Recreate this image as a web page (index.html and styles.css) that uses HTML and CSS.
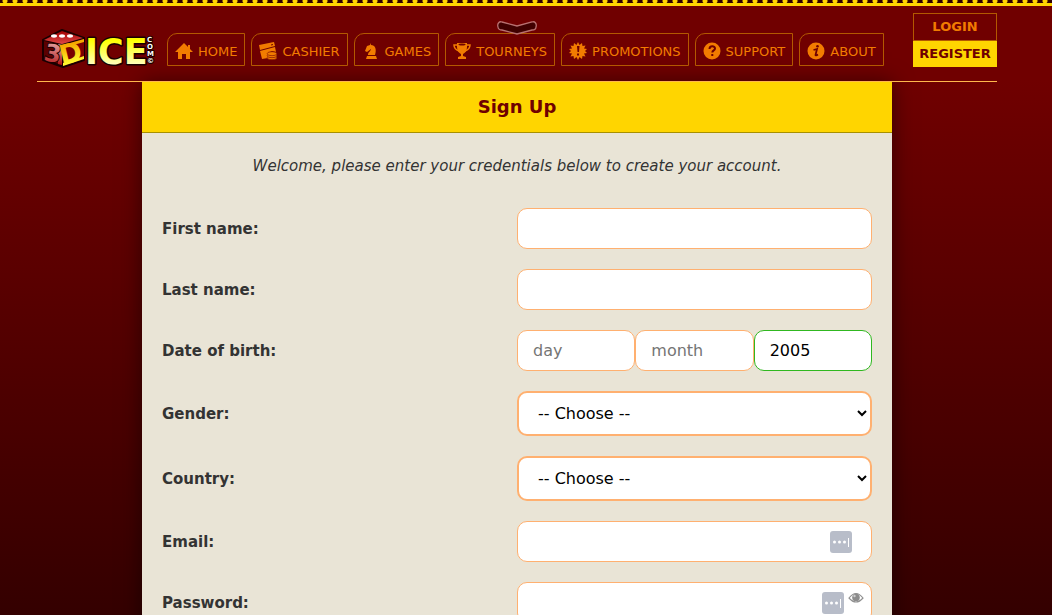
FILE: index.html
```html
<!DOCTYPE html>
<html lang="en">
<head>
    <meta charset="UTF-8">
    <meta name="viewport" content="width=device-width, initial-scale=1.0">
    <title>3Dice - Sign Up</title>
    <link rel="stylesheet" href="styles.css">
</head>
<body>
    <div class="top-strip"></div>

    <div class="page">
        <header class="header">
            <a href="#" class="logo" aria-label="3Dice.com">
                <svg width="118" height="44" viewBox="0 0 118 44">
                    <defs>
                        <linearGradient id="die-top" x1="0" y1="0" x2="0" y2="1">
                            <stop offset="0" stop-color="#a00000"/>
                            <stop offset="1" stop-color="#e04848"/>
                        </linearGradient>
                        <linearGradient id="die-left" x1="0" y1="0" x2="0" y2="1">
                            <stop offset="0" stop-color="#e8b0b0"/>
                            <stop offset="1" stop-color="#b01010"/>
                        </linearGradient>
                        <linearGradient id="d-letter" x1="0" y1="0" x2="0" y2="1">
                            <stop offset="0.2" stop-color="#f5a800"/>
                            <stop offset="0.85" stop-color="#ffff30"/>
                        </linearGradient>
                        <linearGradient id="letters" x1="0" y1="0" x2="0" y2="1">
                            <stop offset="0.2" stop-color="#ffff00"/>
                            <stop offset="0.85" stop-color="#ffffc8"/>
                        </linearGradient>
                    </defs>
                    <path d="M1 11 20 1 42 9V31L21 38 1 31Z" fill="#1a0000" stroke="#1a0000" stroke-width="2" stroke-linejoin="round"/>
                    <path d="M2 11 20 2 41 9 20 15Z" fill="url(#die-top)"/>
                    <path d="M2 12 20 16V36L2 30Z" fill="#5c0000"/>
                    <path d="M16 15 20 16V36L16 35Z" fill="url(#die-left)"/>
                    <path d="M21 16 42 10V30L21 37Z" fill="#7a0000"/>
                    <path d="M21 16 42 10V13L21 19ZM21 34 42 27V30L21 37Z" fill="url(#d-letter)"/>
                    <g fill="#fff">
                        <ellipse cx="12" cy="7" rx="3" ry="1.700"/>
                        <ellipse cx="20" cy="7" rx="3" ry="1.700"/>
                        <ellipse cx="28" cy="7" rx="3" ry="1.700"/>
                    </g>
                    <text x="1" y="31" class="logo-three" transform="rotate(11 1 31)">3</text>
                    <text x="20" y="36" class="logo-d" transform="rotate(-14 20 36)">D</text>
                    <text x="43" y="35" class="logo-name">ICE</text>
                    <g class="logo-side">
                        <text x="105" y="13">C</text>
                        <text x="105" y="20">O</text>
                        <text x="105" y="27">M</text>
                        <text x="105" y="34">©</text>
                    </g>
                </svg>
            </a>

            <nav class="nav">
                <a href="#" class="nav-item">
                    <svg class="icon" viewBox="0 0 18 18"><path d="M9 1 0 10h3v7h4v-5h4v5h4v-7h3l-3-3V3h-2v2z"/></svg>
                    HOME
                </a>
                <a href="#" class="nav-item">
                    <svg class="icon" viewBox="0 0 18 18">
                        <path d="M0 3 15 0l1 4L1 8zM1 9l15-4 1 5-4-1-4 2v5l-6 1z"/>
                        <g fill="#f27c00" stroke="#700000" stroke-width=".6"><ellipse cx="13" cy="15.700" rx="4.800" ry="2"/><ellipse cx="13" cy="13.700" rx="4.800" ry="2"/><ellipse cx="13" cy="11.700" rx="4.800" ry="2"/></g>
                        <path d="M12 3l2-.5" stroke="#700000"/>
                    </svg>
                    CASHIER
                </a>
                <a href="#" class="nav-item">
                    <svg class="icon" viewBox="0 0 18 18"><path d="M8 1 9 3c4 0 6 4 4 10H6c0-3 3-4 3-6L5 10 3 9l2-5 3-1zM5 14h9l1 3H4z"/></svg>
                    GAMES
                </a>
                <a href="#" class="nav-item">
                    <svg class="icon" viewBox="0 0 18 18">
                        <path d="M4 1h10v4c0 4-2 6-4 7v2l3 1v2H5v-2l3-1v-2C6 11 4 9 4 5z"/>
                        <path d="M4 3H1c0 4 2 5 5 6M14 3h3c0 4-2 5-5 6" fill="none" stroke="#f27c00" stroke-width="1.500"/>
                        <ellipse cx="9" cy="2.500" rx="3.500" ry="1" fill="#700000"/>
                    </svg>
                    TOURNEYS
                </a>
                <a href="#" class="nav-item">
                    <svg class="icon" viewBox="0 0 18 18">
                        <path d="m9 0 1.500 3L13 1l.5 3 3-.5L15 6.500 18 7l-2 2 2 2-3 .5 1.500 3-3-.5-.5 3-2.500-2L9 18l-1.500-3L5 17l-.5-3-3 .5 1.500-3L0 11l2-2-2-2 3-.5-1.500-3 3 .5L5 1l2.500 2z"/>
                        <path d="M8 4h2.500L10 10H8.500zM8 11.500h2v2H8z" fill="#700000"/>
                    </svg>
                    PROMOTIONS
                </a>
                <a href="#" class="nav-item">
                    <svg class="icon" viewBox="0 0 18 18"><circle cx="9" cy="9" r="8.500"/><path d="M6.500 7c0-3.500 5.500-3.500 5.500-.5 0 2-2.700 1.800-2.700 4M9.300 12v2" fill="none" stroke="#700000" stroke-width="2"/></svg>
                    SUPPORT
                </a>
                <a href="#" class="nav-item">
                    <svg class="icon" viewBox="0 0 18 18"><circle cx="9" cy="9" r="8.500"/><path d="M6.500 8 10 7 8.500 13q0 1 2.500-.5" fill="none" stroke="#700000" stroke-width="1.800"/><circle cx="10.500" cy="4.300" r="1.300" fill="#700000"/></svg>
                    ABOUT
                </a>
            </nav>

            <div class="account">
                <a href="#" class="login">LOGIN</a>
                <a href="#" class="register">REGISTER</a>
            </div>

            <button class="pull-down" aria-label="Show menu">
                <svg width="40" height="14" viewBox="0 0 40 14"><path d="M5 1 20 5 35 1C38 0 40 3 39 6 39 8 37 9 35 9L20 13 5 9C3 9 1 8 1 6 0 3 2 0 5 1Z" fill="#400000" stroke="#b87070" stroke-width="1.300"/></svg>
            </button>
        </header>

        <main class="panel">
            <h1 class="title">Sign Up</h1>
            <form class="form">
                <p class="intro">Welcome, please enter your credentials below to create your account.</p>

                <div class="row">
                    <label for="first-name">First name:</label>
                    <div class="field"><input type="text" id="first-name"></div>
                </div>
                <div class="row">
                    <label for="last-name">Last name:</label>
                    <div class="field"><input type="text" id="last-name"></div>
                </div>
                <div class="row">
                    <label for="day">Date of birth:</label>
                    <div class="field">
                        <input type="text" id="day" placeholder="day">
                        <input type="text" placeholder="month" aria-label="Month of birth">
                        <input type="text" class="valid" value="2005" aria-label="Year of birth">
                    </div>
                </div>
                <div class="row">
                    <label for="gender">Gender:</label>
                    <div class="field">
                        <select id="gender">
                            <option>-- Choose --</option>
                            <option>Female</option>
                            <option>Male</option>
                        </select>
                    </div>
                </div>
                <div class="row">
                    <label for="country">Country:</label>
                    <div class="field">
                        <select id="country">
                            <option>-- Choose --</option>
                        </select>
                    </div>
                </div>
                <div class="row">
                    <label for="email">Email:</label>
                    <div class="field">
                        <input type="email" id="email">
                        <svg class="key-icon" viewBox="0 0 22 22"><rect width="22" height="22" rx="3"/><g fill="#fff"><circle cx="4.500" cy="11" r="1.500"/><circle cx="9.500" cy="11" r="1.500"/><circle cx="14.500" cy="11" r="1.500"/><path d="M18 7h1v9h-1z"/></g></svg>
                    </div>
                </div>
                <div class="row">
                    <label for="password">Password:</label>
                    <div class="field">
                        <input type="password" id="password">
                        <svg class="key-icon with-eye" viewBox="0 0 22 22"><rect width="22" height="22" rx="3"/><g fill="#fff"><circle cx="4.500" cy="11" r="1.500"/><circle cx="9.500" cy="11" r="1.500"/><circle cx="14.500" cy="11" r="1.500"/><path d="M18 7h1v9h-1z"/></g></svg>
                        <button type="button" class="eye" aria-label="Show password">
                            <svg width="16" height="12" viewBox="0 0 16 12"><path d="M1 6Q8-3 15 6 8 14 1 6Z" fill="#fff" stroke="#909090" stroke-width="1.200"/><circle cx="8" cy="5.500" r="3.800" fill="#8c8c8c"/><circle cx="6.500" cy="4" r="1.200" fill="#ccc"/></svg>
                        </button>
                    </div>
                </div>
            </form>
        </main>
    </div>
</body>
</html>
```
FILE: styles.css
```css
* {
    box-sizing: border-box;
}

html {
    min-height: 100%;
    background: linear-gradient(#700000, #700000 80px, #340000) no-repeat fixed;
}

body {
    margin: 0;
    font-family: Verdana, "DejaVu Sans", sans-serif;
    font-size: 15px;
    color: #333;
}

.top-strip {
    height: 6px;
    border-bottom: 3px solid #ffd500;
    background: radial-gradient(circle at 5px 1px, #ffd500 2px, #300000 3px) 0 0 / 10px 3px;
}

.page {
    padding-right: 18px;
}

.header {
    display: flex;
    align-items: flex-start;
    position: relative;
    max-width: 960px;
    height: 76px;
    margin: 0 auto;
    border-bottom: 1px solid #ffb84d;
}

.logo {
    margin: 23px 7px 0 5px;
    line-height: 0;
}

.logo text {
    font-family: "DejaVu Sans", sans-serif;
    font-weight: bold;
    stroke: #1a0000;
    stroke-linejoin: round;
    paint-order: stroke;
}

.logo .logo-name {
    font-size: 35px;
    fill: url(#letters);
    stroke-width: 3px;
}

.logo .logo-three {
    font-size: 24px;
    fill: url(#die-left);
    stroke-width: 2px;
}

.logo .logo-d {
    font-size: 27px;
    fill: url(#d-letter);
    stroke: none;
}

.logo-side {
    font-size: 7px;
    fill: #fff;
    stroke-width: 2px;
}

.nav {
    display: flex;
    gap: 6px;
    margin-top: 27px;
}

.nav-item {
    display: flex;
    align-items: center;
    gap: 5px;
    height: 33px;
    padding: 3px 7px 0;
    border: 1px solid #b35900;
    border-top-left-radius: 10px;
    color: #f27c00;
    font-size: 13px;
    text-decoration: none;
    white-space: nowrap;
}

.icon {
    width: 18px;
    height: 18px;
    fill: #f27c00;
}

.account {
    width: 84px;
    margin: 7px 0 0 auto;
    font-size: 13px;
    font-weight: bold;
    text-align: center;
}

.login,
.register {
    display: block;
    text-decoration: none;
    line-height: 26px;
}

.login {
    border: 1px solid #b35900;
    color: #f27c00;
}

.register {
    background: #ffd500;
    color: #700000;
}

.pull-down {
    position: absolute;
    top: 15px;
    left: 50%;
    margin-left: -20px;
    padding: 0;
    border: 0;
    background: none;
    line-height: 0;
}

.panel {
    max-width: 750px;
    margin: 0 auto;
    background: #e9e4d6;
    box-shadow: 0 0 20px rgba(0, 0, 0, 0.5);
}

.title {
    margin: 0;
    border-bottom: 1px solid #a89000;
    background: #ffd500;
    color: #700000;
    font-size: 18px;
    line-height: 50px;
    text-align: center;
}

.form {
    padding: 20px;
}

.intro {
    margin: 0 0 28px;
    font-style: italic;
    line-height: 27px;
    text-align: center;
}

.row {
    display: grid;
    grid-template-columns: repeat(2, minmax(0, 1fr));
    align-items: center;
    margin-bottom: 20px;
}

.row label {
    font-weight: bold;
}

.field {
    display: flex;
    position: relative;
}

.field input,
.field select {
    flex: 1;
    min-width: 0;
    border: 1px solid #ffb070;
    border-radius: 10px;
    background: #fff;
    color: #000;
    font-family: inherit;
    font-size: 16px;
}

.field input {
    height: 41px;
    padding: 0 15px;
}

.field input::placeholder {
    color: #757575;
}

.field input.valid {
    border-color: #30b820;
}

.field select {
    height: 45px;
    padding: 0 0 0 15px;
    border-width: 2px;
}

.key-icon {
    position: absolute;
    top: 10px;
    right: 20px;
    width: 22px;
    height: 22px;
    fill: #b8bdc9;
}

.key-icon.with-eye {
    right: 28px;
}

.eye {
    position: absolute;
    top: 10px;
    right: 8px;
    padding: 0;
    border: 0;
    background: none;
    line-height: 0;
}
```
